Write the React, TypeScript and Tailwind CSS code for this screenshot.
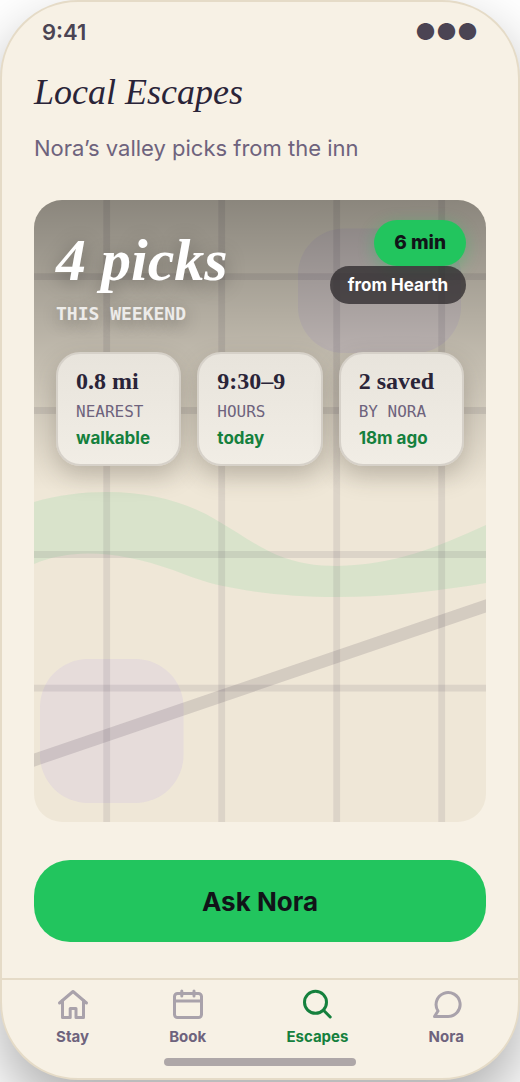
import type { ReactNode } from "react";

const stats = [
  { value: "0.8 mi", label: "NEAREST", note: "walkable" },
  { value: "9:30–9", label: "HOURS", note: "today" },
  { value: "2 saved", label: "BY NORA", note: "18m ago" },
];

const tabs: { name: string; active?: boolean; icon: ReactNode }[] = [
  {
    name: "Stay",
    icon: (
      <>
        <path d="M2.5 15 16 3.5 29.5 15" />
        <path d="M5.5 12.5v17h7.7v-9H19v9h7.5v-17" />
      </>
    ),
  },
  {
    name: "Book",
    icon: (
      <>
        <rect x="2.5" y="5.5" width="27" height="24" rx="3" />
        <path d="M2.5 13h27M9.8 3v5M22 3v5" />
      </>
    ),
  },
  {
    name: "Escapes",
    active: true,
    icon: (
      <>
        <circle cx="14.5" cy="14.3" r="11" />
        <path d="m22.5 22.3 6.7 6.7" />
      </>
    ),
  },
  { name: "Nora", icon: <path d="M4.5 28.5 8 23A12 12 0 1 1 17.5 28.5Z" /> },
];

function ValleyMap() {
  return (
    <svg className="absolute inset-0 h-full w-full" viewBox="0 0 452 622" preserveAspectRatio="xMidYMid slice" aria-hidden="true">
      <rect width="452" height="622" fill="#efe7d7" />
      <path
        fill="#22c55e"
        fillOpacity="0.1"
        d="M0 302C24 295 48 292 73 292C118 292 155 303 184 321C205 333 222 346 243 355C262 363 282 366 303 366C360 365 404 347 452 325V383C404 391 355 397 303 397C262 397 222 393 189 386C170 382 155 376 139 370C108 359 80 353.5 54 353.5C36 353.5 16 357 0 364Z"
      />
      <g fill="#a78bfa" fillOpacity="0.12">
        <rect x="264" y="28.5" width="163" height="124.5" rx="46" />
        <rect x="6" y="459" width="143.5" height="144" rx="48" />
      </g>
      <g stroke="#4b3f55" strokeOpacity="0.11" strokeWidth="6.8">
        <path d="M72.7 0v622M187.7 0v622M302.7 0v622M407.7 0v622" />
        <path d="M0 76.7h452M0 210.5h452M0 354.5h452M0 488.2h452" />
      </g>
      <path d="M-10 563.5 462 402.5" stroke="#4b4050" strokeOpacity="0.16" strokeWidth="12.4" />
    </svg>
  );
}

export default function App() {
  return (
    <div className="min-h-screen bg-white pb-0.5 font-['Inter',sans-serif]">
      <div className="flex min-h-[calc(100vh-2px)] flex-col overflow-hidden rounded-[78px] border-2 border-[#e5dbc7] bg-[#f7f1e5] shadow-[0_28px_60px_rgba(0,0,0,0.32)]">
        <div className="flex h-[60px] items-center justify-between px-10 text-[22px] font-semibold text-[#4b4453]">
          <span>9:41</span>
          <span className="text-[23px]">●●●</span>
        </div>

        <main className="flex flex-1 flex-col px-8">
          <h1 className="font-['Liberation_Serif',serif] text-[36px] leading-[60px] text-[#2a2438] italic">Local Escapes</h1>
          <p className="mt-3 text-[22px] leading-7 text-[#6e637d]">Nora’s valley picks from the inn</p>

          <section className="relative mt-[38px] flex-1 overflow-hidden rounded-[28px]">
            <ValleyMap />
            <div className="absolute inset-x-0 top-0 h-[290px] bg-linear-to-b from-black/42 to-transparent" />
            <div className="relative">
              <div className="flex items-start justify-between pt-5 pr-5 pl-[22px]">
                <div>
                  <h2 className="font-['Liberation_Serif',serif] text-[60px] leading-[80px] font-bold text-white italic [text-shadow:0_4px_20px_rgba(0,0,0,0.35)]">4 picks</h2>
                  <p className="mt-1 font-['DejaVu_Sans_Mono',monospace] text-[18px] leading-5 font-bold text-white/80 [text-shadow:0_4px_16px_rgba(0,0,0,0.35)]">THIS WEEKEND</p>
                </div>
                <div className="flex flex-col items-end">
                  <span className="rounded-full bg-[#22c55e] px-5 text-[19px] leading-[46px] font-extrabold text-[#111418] shadow-[0_4px_16px_rgba(34,197,94,0.4)]">6 min</span>
                  <span className="relative rounded-full bg-[#2b272a]/75 px-[18px] text-[17px] leading-[38px] font-bold text-white">from Hearth</span>
                </div>
              </div>

              <div className="mt-7 grid grid-cols-3 gap-4 px-[22px]">
                {stats.map((s) => (
                  <div key={s.label} className="rounded-3xl border-2 border-[#d6d1c9] bg-linear-to-b from-[#e8e4dc] to-[#f1ede5] px-[18px] pt-3 pb-3.5 whitespace-nowrap shadow-[0_10px_24px_rgba(60,50,40,0.25)]">
                    <div className="font-['Liberation_Serif',serif] text-[24px] leading-[30px] font-bold text-[#2a2438]">{s.value}</div>
                    <div className="mt-1.5 font-['DejaVu_Sans_Mono',monospace] text-[16px] leading-5 text-[#6e637d]">{s.label}</div>
                    <div className="mt-1 text-[17px] leading-6 font-bold text-[#15803d]">{s.note}</div>
                  </div>
                ))}
              </div>
            </div>
          </section>

          <button className="mt-[38px] h-[82px] w-full rounded-[36px] bg-[#22c55e] text-[26px] font-bold text-[#111418]">Ask Nora</button>
        </main>

        <footer className="mt-9 border-t-2 border-[#e5dbc7] pt-2 pb-3">
          <nav className="flex justify-around px-3.5">
            {tabs.map((t) => (
              <a key={t.name} href="#" className={t.active ? "flex flex-col items-center text-[#15803d]" : "flex flex-col items-center text-[#6e637d]"}>
                <svg
                  className={t.active ? "h-8 w-8" : "h-8 w-8 text-[#a9a2ab]"}
                  viewBox="0 0 32 32"
                  fill="none"
                  stroke="currentColor"
                  strokeWidth="3"
                  strokeLinecap="round"
                  strokeLinejoin="round"
                  aria-hidden="true"
                >
                  {t.icon}
                </svg>
                <span className="mt-1.5 text-[15px] leading-[22px] font-bold">{t.name}</span>
              </a>
            ))}
          </nav>
          <div className="mx-auto mt-2.5 h-2 w-48 rounded-full bg-[#aea7a8]" />
        </footer>
      </div>
    </div>
  );
}
